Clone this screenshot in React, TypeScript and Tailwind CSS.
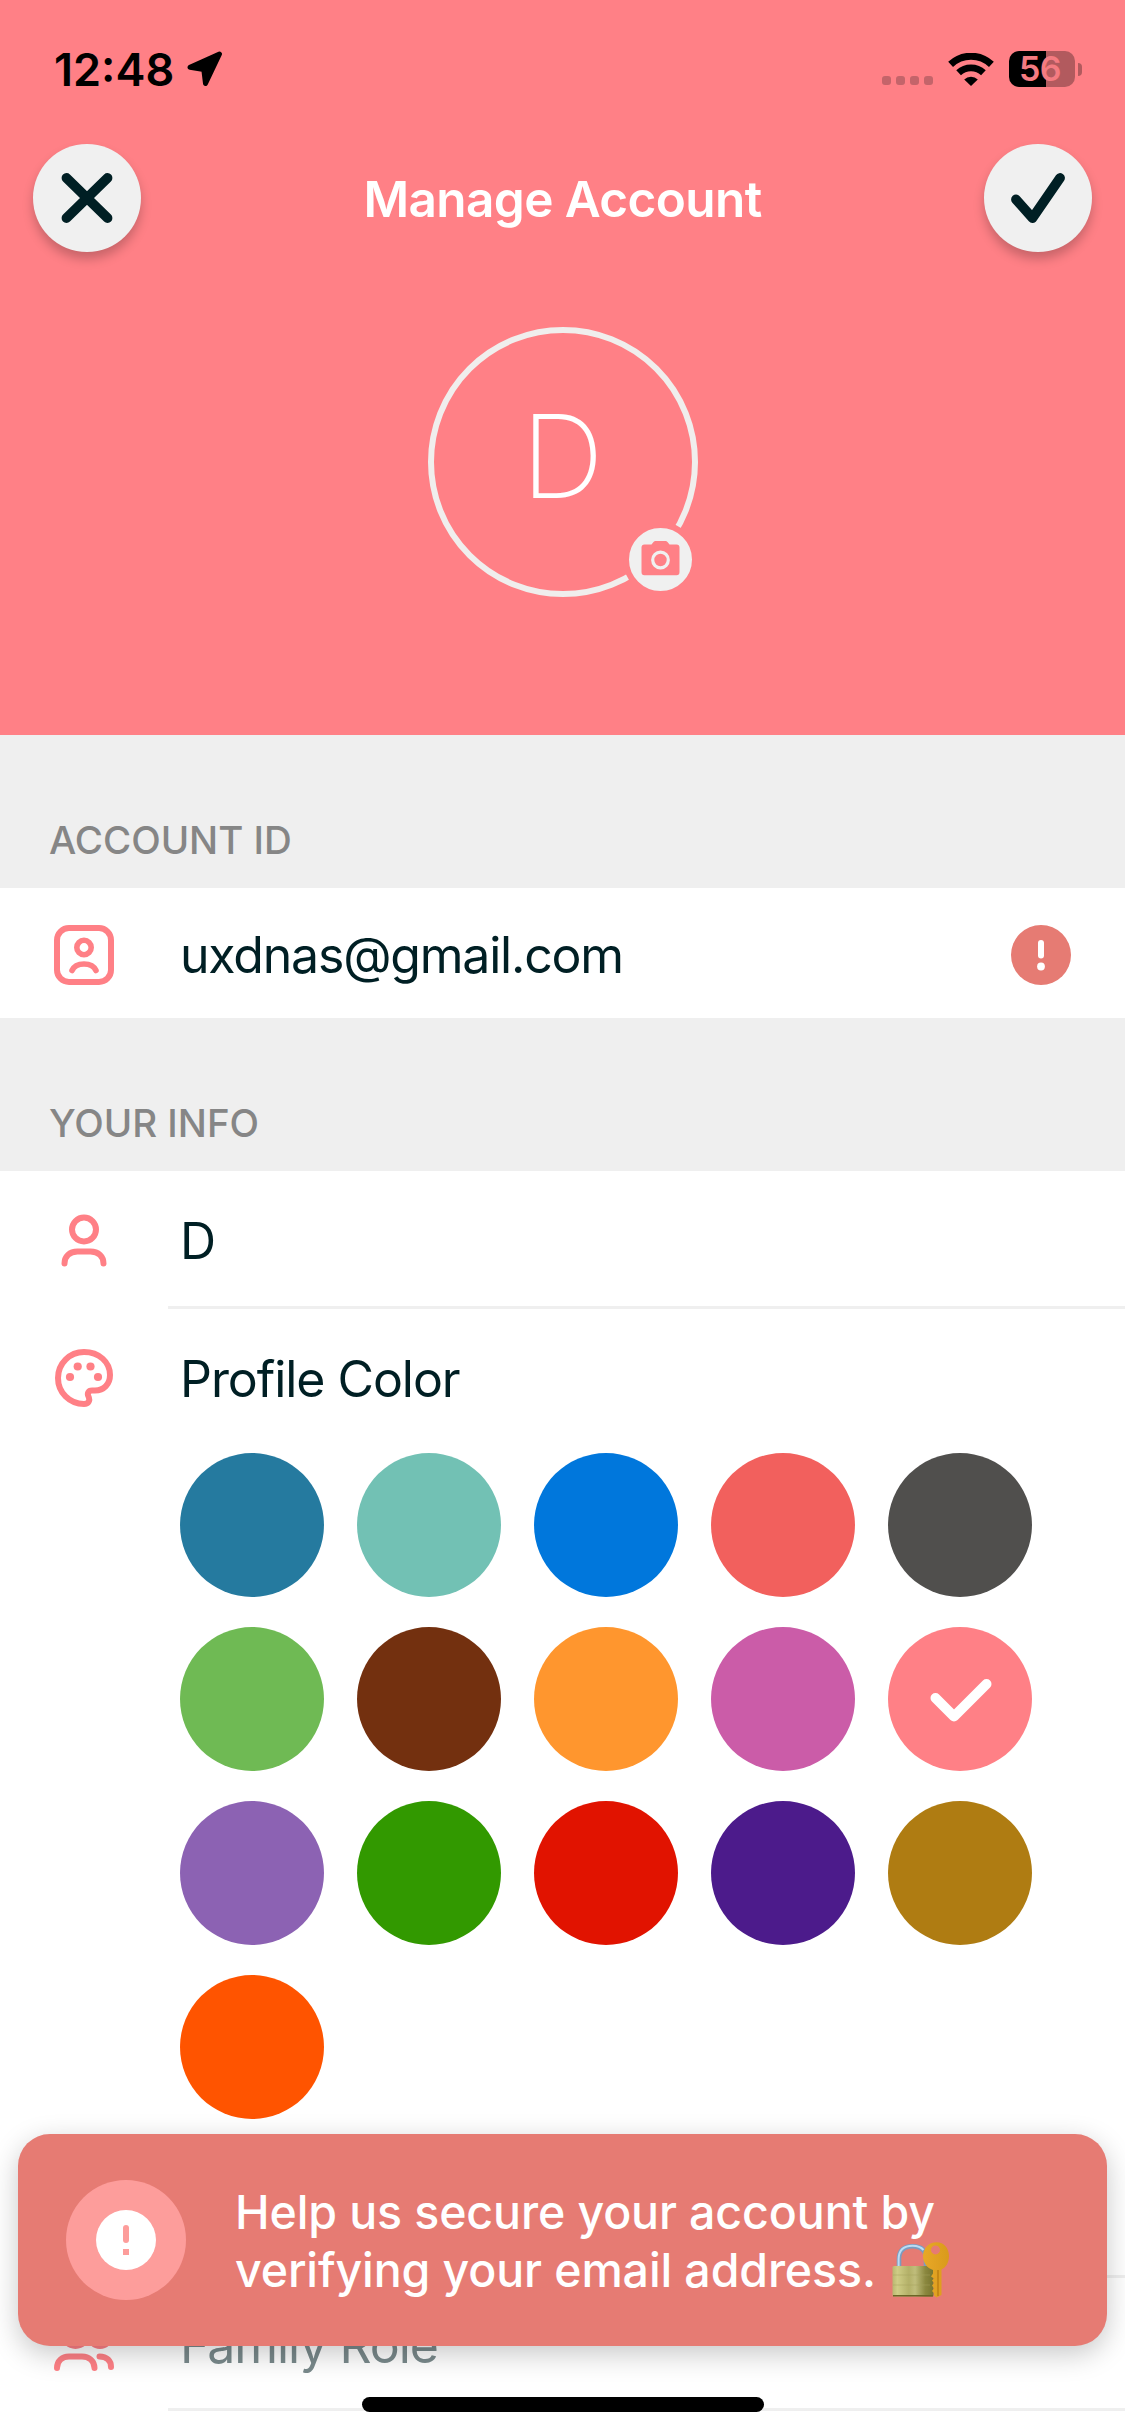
import { clsx } from "clsx";
import type { ReactNode } from "react";

const swatches = [
  { name: "Ocean", bg: "bg-[#257a9f]" },
  { name: "Mint", bg: "bg-[#72c1b4]" },
  { name: "Blue", bg: "bg-[#0077dc]" },
  { name: "Coral", bg: "bg-[#f2605d]" },
  { name: "Charcoal", bg: "bg-[#504f4d]" },
  { name: "Green", bg: "bg-[#6fba54]" },
  { name: "Brown", bg: "bg-[#73300f]" },
  { name: "Orange", bg: "bg-[#ff962e]" },
  { name: "Orchid", bg: "bg-[#cb5ca8]" },
  { name: "Pink", bg: "bg-[#ff8086]", selected: true },
  { name: "Lavender", bg: "bg-[#8c62b3]" },
  { name: "Forest", bg: "bg-[#329900]" },
  { name: "Red", bg: "bg-[#e11300]" },
  { name: "Indigo", bg: "bg-[#4c1b8b]" },
  { name: "Gold", bg: "bg-[#af7c12]" },
  { name: "Flame", bg: "bg-[#ff5400]" },
];

function StatusBar() {
  return (
    <div className="flex h-[138px] items-center justify-between pl-[54px] pr-[43px] text-black">
      <div className="flex items-center gap-[13px]">
        <span className="text-[45px] font-semibold leading-none">12:48</span>
        <svg width="36" height="36" viewBox="0 0 36 36" fill="currentColor">
          <path
            d="M32.5 3 L18.5 32.5 L16.8 18.5 L3 16.3 Z"
            stroke="currentColor"
            strokeWidth="5"
            strokeLinejoin="round"
          />
        </svg>
      </div>
      <div className="flex items-center gap-[15px]">
        <div className="flex gap-[5px] pt-[23px]">
          <span className="size-[9px] rounded-[3px] bg-[#c4646a]" />
          <span className="size-[9px] rounded-[3px] bg-[#c4646a]" />
          <span className="size-[9px] rounded-[3px] bg-[#c4646a]" />
          <span className="size-[9px] rounded-[3px] bg-[#c4646a]" />
        </div>
        <svg width="46" height="33" viewBox="0 0 46 33" fill="none" stroke="currentColor">
          <path d="M2.6 11.4 A29.5 29.5 0 0 1 43.4 11.4" strokeWidth="7" />
          <path d="M10.6 19.8 A18 18 0 0 1 35.4 19.8" strokeWidth="6.8" />
          <path d="M23 33 L16.2 26.6 A9.8 9.8 0 0 1 29.8 26.6 Z" fill="currentColor" stroke="none" />
        </svg>
        <div className="flex items-center gap-[3px]">
          <div className="flex h-9 w-[66px] items-center justify-center rounded-[10px] bg-[linear-gradient(to_right,#000_37px,#b25a5e_37px)] pr-1">
            <span className="text-[34px] font-semibold leading-none tracking-[-0.6px] text-[#f47b81]">56</span>
          </div>
          <span className="h-[13px] w-1 rounded-r-full bg-[#b25a5e]" />
        </div>
      </div>
    </div>
  );
}

function RoundButton({ label, children }: { label: string; children: ReactNode }) {
  return (
    <button
      aria-label={label}
      className="size-[108px] rounded-full bg-[#f0f0f0] text-[#001f24] shadow-[0_7px_11px_rgba(0,0,0,0.22)]"
    >
      <svg
        width="108"
        height="108"
        viewBox="0 0 108 108"
        fill="none"
        stroke="currentColor"
        strokeWidth="9.8"
        strokeLinecap="round"
        strokeLinejoin="round"
      >
        {children}
      </svg>
    </button>
  );
}

function Avatar() {
  return (
    <div className="relative flex size-[270px] items-center justify-center rounded-full border-[6px] border-[#f0eeed] pb-3">
      <span className="text-[115px] font-[240] leading-none text-white">D</span>
      <div className="absolute bottom-[-6px] right-[-6px] flex size-[75px] items-center justify-center rounded-full border-[6px] border-[#ff8086] bg-[#f0f0f0]">
        <svg width="39" height="35" viewBox="0 0 39 35" className="mb-[3px]">
          <path
            d="M3.5 3.5 H10.5 L12.5 1 Q13.3 0 14.5 0 H24.5 Q25.7 0 26.5 1 L28.5 3.5 H35.5 Q38.5 3.5 38.5 6.5 V31 Q38.5 34.3 35.5 34.3 H3.5 Q0.5 34.3 0.5 31 V6.5 Q0.5 3.5 3.5 3.5 Z"
            fill="#ff8086"
          />
          <circle cx="19.5" cy="19" r="7.8" fill="none" stroke="#f0f0f0" strokeWidth="3.2" />
        </svg>
      </div>
    </div>
  );
}

function SectionHeader({ title }: { title: string }) {
  return (
    <h2 className="flex h-[153px] shrink-0 items-end bg-[#efefef] pb-6 pl-[49px] text-[38.5px] font-medium leading-[48px] tracking-[-0.05px] text-[#868686]">
      {title}
    </h2>
  );
}

function LineIcon({ children }: { children: ReactNode }) {
  return (
    <svg
      width="60"
      height="60"
      viewBox="0 0 60 60"
      fill="none"
      stroke="#ff8086"
      strokeWidth="6"
      strokeLinecap="round"
      strokeLinejoin="round"
      className="shrink-0"
    >
      {children}
    </svg>
  );
}

function LockWithKey() {
  return (
    <svg width="58" height="56" viewBox="0 0 58 56" aria-label="locked with key">
      <defs>
        <linearGradient id="lock-body" x1="0" x2="1" y1="0" y2="0">
          <stop offset="0" stopColor="#b9b870" />
          <stop offset="0.12" stopColor="#cfcd86" />
          <stop offset="0.4" stopColor="#b3b068" />
          <stop offset="0.55" stopColor="#c0bd7c" />
          <stop offset="0.8" stopColor="#8b883f" />
          <stop offset="1" stopColor="#77742f" />
        </linearGradient>
        <linearGradient id="lock-key" x1="0" x2="1" y1="0" y2="0">
          <stop offset="0" stopColor="#e8a827" />
          <stop offset="1" stopColor="#d99a1c" />
        </linearGradient>
      </defs>
      <path d="M7 26 V17 Q7 4.2 20.5 4.2 Q34 4.2 34 17 V26" fill="none" stroke="#7a9cc0" strokeWidth="4.6" />
      <path d="M6.6 25 V17 Q7 3.8 20.5 3.8 Q28 3.8 31.5 8" fill="none" stroke="#bcdcf3" strokeWidth="2" />
      <rect x="0.5" y="24" width="41" height="30.5" rx="1.5" fill="url(#lock-body)" />
      <path d="M1 33 H38 M1 43 H38" stroke="#a5a15c" strokeWidth="0.5" />
      <path d="M1 53.7 H41" stroke="#6b6526" strokeWidth="1.6" />
      <path
        fillRule="evenodd"
        d="M44.5 0.3 C52 0.3 57 6.5 57 14 C57 20.5 54 25.5 49.5 27.5 V53 L44.5 55.5 L42 53.5 V51 L40 49 L42 46.5 L40 43.5 L42 41 L40 38.5 L42 36.5 L39 34.5 L41 31.5 V28 C35 26 31 20.5 31 14 C31 6.5 37 0.3 44.5 0.3 Z M43.5 3.4 A4.5 4.5 0 1 0 43.5 12.4 A4.5 4.5 0 1 0 43.5 3.4 Z"
        fill="url(#lock-key)"
      />
      <path d="M46 28 V54" stroke="#b97a10" strokeWidth="1.3" />
    </svg>
  );
}

function VerifyToast() {
  return (
    <div className="absolute bottom-[90px] left-[18px] right-[18px] flex h-[212px] items-center rounded-[32px] bg-[#e67b73] pl-12 shadow-[0_8px_28px_rgba(0,0,0,0.22)]">
      <div className="flex size-[120px] shrink-0 items-center justify-center rounded-full bg-[#fd9d9b]">
        <svg width="60" height="60" viewBox="0 0 60 60">
          <circle cx="30" cy="30" r="30" fill="#fff" />
          <rect x="27" y="15" width="6" height="18" rx="3" fill="#fd9d9b" />
          <rect x="27" y="39" width="6" height="6" fill="#fd9d9b" />
        </svg>
      </div>
      <div className="ml-[49px] whitespace-nowrap pt-px text-[46.5px] font-medium leading-[58px] tracking-[-0.12px] text-white">
        <p>Help us secure your account by</p>
        <p className="flex items-center">
          verifying your email address.
          <span className="ml-4">
            <LockWithKey />
          </span>
        </p>
      </div>
    </div>
  );
}

export default function App() {
  return (
    <div className="relative flex h-[2436px] w-[1125px] flex-col overflow-hidden bg-white font-['Inter','Liberation_Sans',sans-serif] text-[50px] leading-[60px] tracking-[-1.05px] text-[#001f24]">
      <header className="flex h-[735px] shrink-0 flex-col bg-[#ff8086] tracking-normal">
        <StatusBar />
        <div className="mt-1.5 flex h-[108px] items-center justify-between px-[33px]">
          <RoundButton label="Close">
            <path d="M33.5 34 L74.5 74 M74.5 34 L33.5 74" />
          </RoundButton>
          <h1 className="pt-0.5 text-[49.5px] font-semibold tracking-[-0.6px] text-white">Manage Account</h1>
          <RoundButton label="Save">
            <path d="M32 55.5 L48.5 74 L76 34" />
          </RoundButton>
        </div>
        <div className="mt-[75px] flex justify-center">
          <Avatar />
        </div>
      </header>

      <SectionHeader title="ACCOUNT ID" />
      <div className="flex h-[130px] shrink-0 items-center pl-[54px] pr-[54px] pt-1">
        <LineIcon>
          <rect x="3" y="3" width="54" height="54" rx="12" />
          <circle cx="30" cy="22.5" r="7.2" strokeWidth="5.6" />
          <path d="M18 45.5 C20 41 25 39 30 39 C35 39 40 41 42 45.5" strokeWidth="5.6" />
        </LineIcon>
        <span className="ml-[66px] tracking-[-1.2px]">uxdnas@gmail.com</span>
        <svg width="60" height="60" viewBox="0 0 60 60" className="ml-auto">
          <circle cx="30" cy="30" r="30" fill="#e67b73" />
          <rect x="27" y="15" width="6" height="18.5" rx="3" fill="#fff" />
          <circle cx="30" cy="41.5" r="3.9" fill="#fff" />
        </svg>
      </div>

      <SectionHeader title="YOUR INFO" />
      <div className="flex h-[135px] shrink-0 items-center pl-[54px]">
        <LineIcon>
          <circle cx="30" cy="20.5" r="12" />
          <path d="M10.5 54.5 C10.5 47.5 15.5 42.5 23.5 42.5 H36.5 C44.5 42.5 49.5 47.5 49.5 54.5" />
        </LineIcon>
        <span className="ml-[66px] pt-1">D</span>
      </div>
      <div className="ml-[168px] h-[3px] shrink-0 bg-[#efefef]" />

      <div className="flex h-[144px] shrink-0 items-center pl-[54px] pb-[6px]">
        <LineIcon>
          <path d="M30 4 C45 4 56 14 56 27 C56 36 50 42.5 41 42.5 H38 C34.2 42.5 33 45.5 34.5 48.5 C36.4 52.5 34.5 56 30 56 C15.5 56 4 44.5 4 30 C4 15.5 15.5 4 30 4 Z" />
          <g fill="#ff8086" stroke="none">
            <circle cx="16" cy="29" r="4.1" />
            <circle cx="23.7" cy="18.5" r="4.1" />
            <circle cx="36.5" cy="18.5" r="4.1" />
            <circle cx="44" cy="29" r="4.1" />
          </g>
        </LineIcon>
        <span className="ml-[66px] pt-0.5">Profile Color</span>
      </div>
      <div className="ml-[180px] grid w-max shrink-0 grid-cols-5 gap-x-[33px] gap-y-[30px]">
        {swatches.map((swatch) => (
          <button
            key={swatch.name}
            aria-label={swatch.name}
            className={clsx("size-[144px] rounded-full", swatch.bg)}
          >
            {swatch.selected && (
              <svg width="144" height="144" viewBox="0 0 144 144" fill="none">
                <path
                  d="M47.5 71 L66 89.5 L98.5 57"
                  stroke="#fff"
                  strokeWidth="10"
                  strokeLinecap="round"
                  strokeLinejoin="round"
                />
              </svg>
            )}
          </button>
        ))}
      </div>
      <div className="ml-[168px] mt-[156px] h-[3px] shrink-0 bg-[#efefef]" />

      <div className="flex h-[130px] shrink-0 items-center pl-[54px]">
        <LineIcon>
          <circle cx="21.5" cy="21" r="12" />
          <circle cx="46" cy="23" r="10" />
          <path d="M3 55 C3 48 8 43.5 15 43.5 H28 C35 43.5 40.5 48 40.5 55" />
          <path d="M45.5 43.5 C53 43.5 57 48 57 54" />
        </LineIcon>
        <span className="ml-[66px] pt-1 text-[#7a8a8c]">Family Role</span>
      </div>
      <div className="ml-[168px] h-[3px] shrink-0 bg-[#efefef]" />

      <VerifyToast />
      <div className="absolute bottom-6 left-[362px] h-[15px] w-[402px] rounded-full bg-black" />
    </div>
  );
}
